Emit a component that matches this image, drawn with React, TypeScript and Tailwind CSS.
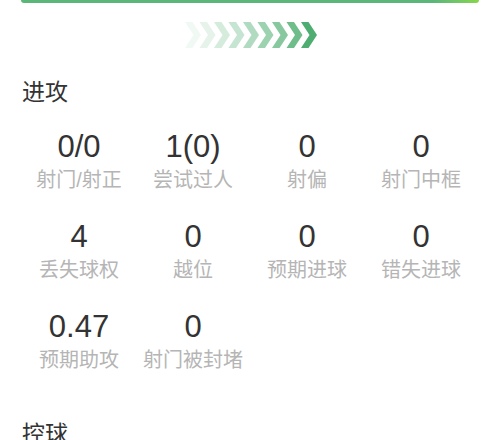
import React from "react";

const stats = [
  { value: "0/0", label: "射门/射正" },
  { value: "1(0)", label: "尝试过人" },
  { value: "0", label: "射偏" },
  { value: "0", label: "射门中框" },
  { value: "4", label: "丢失球权" },
  { value: "0", label: "越位" },
  { value: "0", label: "预期进球" },
  { value: "0", label: "错失进球" },
  { value: "0.47", label: "预期助攻" },
  { value: "0", label: "射门被封堵" },
];

const opacities = [0.08, 0.15, 0.24, 0.33, 0.44, 0.56, 0.68, 0.82, 1];

function Chevrons() {
  return (
    <svg width="132" height="26" viewBox="0 0 132 26">
      {opacities.map((o, i) => {
        const x = i * 14.5;
        return (
          <polygon
            key={i}
            points={`${x},0 ${x + 7.5},0 ${x + 16},13 ${x + 7.5},26 ${x},26 ${x + 8.5},13`}
            fill="#4eae72"
            fillOpacity={o}
          />
        );
      })}
    </svg>
  );
}

export default function App() {
  return (
    <div
      className="w-[500px] h-[440px] overflow-hidden bg-white"
      style={{ fontFamily: '"Liberation Sans", "Noto Sans CJK SC", sans-serif' }}
    >
      <div className="mx-[21px] h-[3px] bg-gradient-to-r from-[#5bb679] via-[#5bb679] via-[90%] to-[#86d64a] rounded-b-sm" />

      <div className="mt-[19px] flex justify-center pl-[2px]">
        <Chevrons />
      </div>

      <h2 className="mt-[30px] ml-[22px] text-[23px] leading-[28px] text-[#333333]">进攻</h2>

      <div className="mt-[24px] px-[22px] grid grid-cols-4 gap-y-[25px]">
        {stats.map((s, i) => (
          <div key={i} className="flex flex-col items-center">
            <div className="text-[31px] leading-[34px] text-[#333333]">{s.value}</div>
            <div className="pt-[2px] text-[20px] leading-[29px] text-[#b5b5b5]">{s.label}</div>
          </div>
        ))}
      </div>

      <h2 className="mt-[45px] ml-[22px] text-[23px] leading-[28px] text-[#333333]">控球</h2>
    </div>
  );
}
